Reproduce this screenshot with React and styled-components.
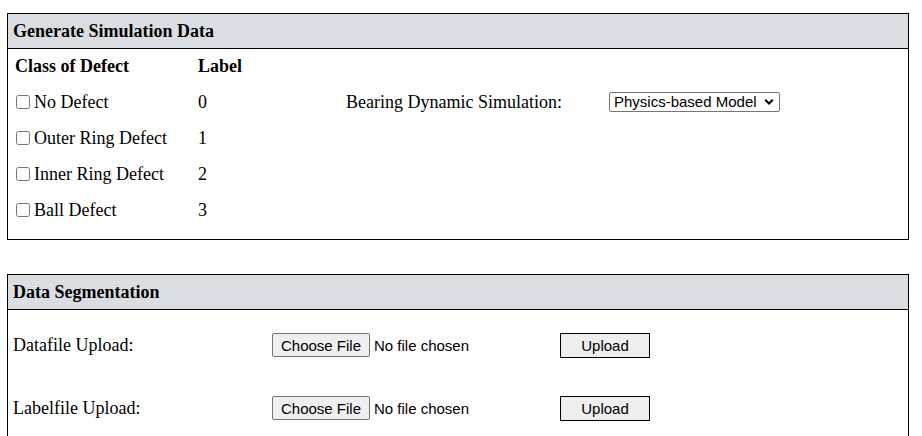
import React from "react";
import styled, { createGlobalStyle } from "styled-components";

const GlobalStyle = createGlobalStyle`
  html, body { margin: 0; padding: 0; background: #ffffff; }
  body { font-family: "Liberation Serif", "Times New Roman", serif; font-size: 18px; color: #000; }
`;

const Page = styled.div`
  padding: 13px 13px 0 7px;
  display: flex;
  flex-direction: column;
  gap: 34px;
`;

const Panel = styled.section`
  border: 1px solid #000;
  background: #fff;
`;

const PanelHeader = styled.div`
  height: 34px;
  display: flex;
  align-items: center;
  padding: 0 5px;
  background: #dadee2;
  border-bottom: 1px solid #000;
  font-weight: bold;
  font-size: 18px;
`;

const DefectGrid = styled.div`
  display: grid;
  grid-template-columns: 183px 148px 263px auto;
  grid-auto-rows: 36px;
  padding: 0 0 11px 7px;
  margin-top: -1px;
`;

const Cell = styled.div`
  display: flex;
  align-items: center;
  font-weight: ${(p) => (p.$bold ? "bold" : "normal")};
  white-space: nowrap;
`;

const Check = styled.input.attrs({ type: "checkbox" })`
  width: 14px;
  height: 14px;
  margin: 0 4px 0 1px;
`;

const SelectWrap = styled.div`
  position: relative;
  display: inline-flex;
  align-items: center;
`;

const Select = styled.select`
  appearance: none;
  -webkit-appearance: none;
  width: 171px;
  height: 20px;
  padding: 0 20px 0 4px;
  border: 1px solid #767676;
  border-radius: 2px;
  background: #fff;
  color: #000;
  font-family: "Liberation Sans", Arial, sans-serif;
  font-size: 15px;
  line-height: 18px;
`;

const Chevron = styled.svg`
  position: absolute;
  right: 6px;
  top: 50%;
  transform: translateY(-50%);
  pointer-events: none;
`;

const UploadBody = styled.div`
  display: flex;
  flex-direction: column;
  gap: 27px;
  padding: 17px 0 18px 5px;
`;

const UploadRow = styled.div`
  display: grid;
  grid-template-columns: 259px 288px auto;
  height: 36px;
  align-items: center;
`;

const FileInput = styled.input.attrs({ type: "file" })`
  font-family: "Liberation Sans", Arial, sans-serif;
  font-size: 15px;
  color: #000;
  width: 288px;

  &::file-selector-button {
    font-family: "Liberation Sans", Arial, sans-serif;
    font-size: 15px;
    width: 98px;
    height: 24px;
    margin-right: 4px;
    padding: 0;
    border: 1px solid #767676;
    border-radius: 2px;
    background: #efefef;
    color: #000;
  }
`;

const UploadButton = styled.button`
  width: 90px;
  height: 25px;
  padding: 0;
  border: 1px solid #000;
  border-radius: 0;
  background: #efefef;
  color: #000;
  font-family: "Liberation Sans", Arial, sans-serif;
  font-size: 15px;
`;

const defects = [
  ["No Defect", 0],
  ["Outer Ring Defect", 1],
  ["Inner Ring Defect", 2],
  ["Ball Defect", 3],
];

export default function App() {
  return (
    <>
      <GlobalStyle />
      <Page>
        <Panel>
          <PanelHeader>Generate Simulation Data</PanelHeader>
          <DefectGrid>
            <Cell $bold>Class of Defect</Cell>
            <Cell $bold>Label</Cell>
            <Cell />
            <Cell />
            {defects.map(([name, label], i) => (
              <React.Fragment key={name}>
                <Cell>
                  <Check />
                  {name}
                </Cell>
                <Cell>{label}</Cell>
                <Cell>{i === 0 ? "Bearing Dynamic Simulation:" : ""}</Cell>
                <Cell>
                  {i === 0 && (
                    <SelectWrap>
                      <Select defaultValue="physics">
                        <option value="physics">Physics-based Model</option>
                      </Select>
                      <Chevron width="10" height="7" viewBox="0 0 10 7">
                        <path d="M1.2 1.2 L5 5 L8.8 1.2" fill="none" stroke="#000" strokeWidth="2" />
                      </Chevron>
                    </SelectWrap>
                  )}
                </Cell>
              </React.Fragment>
            ))}
          </DefectGrid>
        </Panel>
        <Panel>
          <PanelHeader>Data Segmentation</PanelHeader>
          <UploadBody>
            <UploadRow>
              <Cell>Datafile Upload:</Cell>
              <Cell><FileInput /></Cell>
              <Cell><UploadButton>Upload</UploadButton></Cell>
            </UploadRow>
            <UploadRow>
              <Cell>Labelfile Upload:</Cell>
              <Cell><FileInput /></Cell>
              <Cell><UploadButton>Upload</UploadButton></Cell>
            </UploadRow>
          </UploadBody>
        </Panel>
      </Page>
    </>
  );
}
